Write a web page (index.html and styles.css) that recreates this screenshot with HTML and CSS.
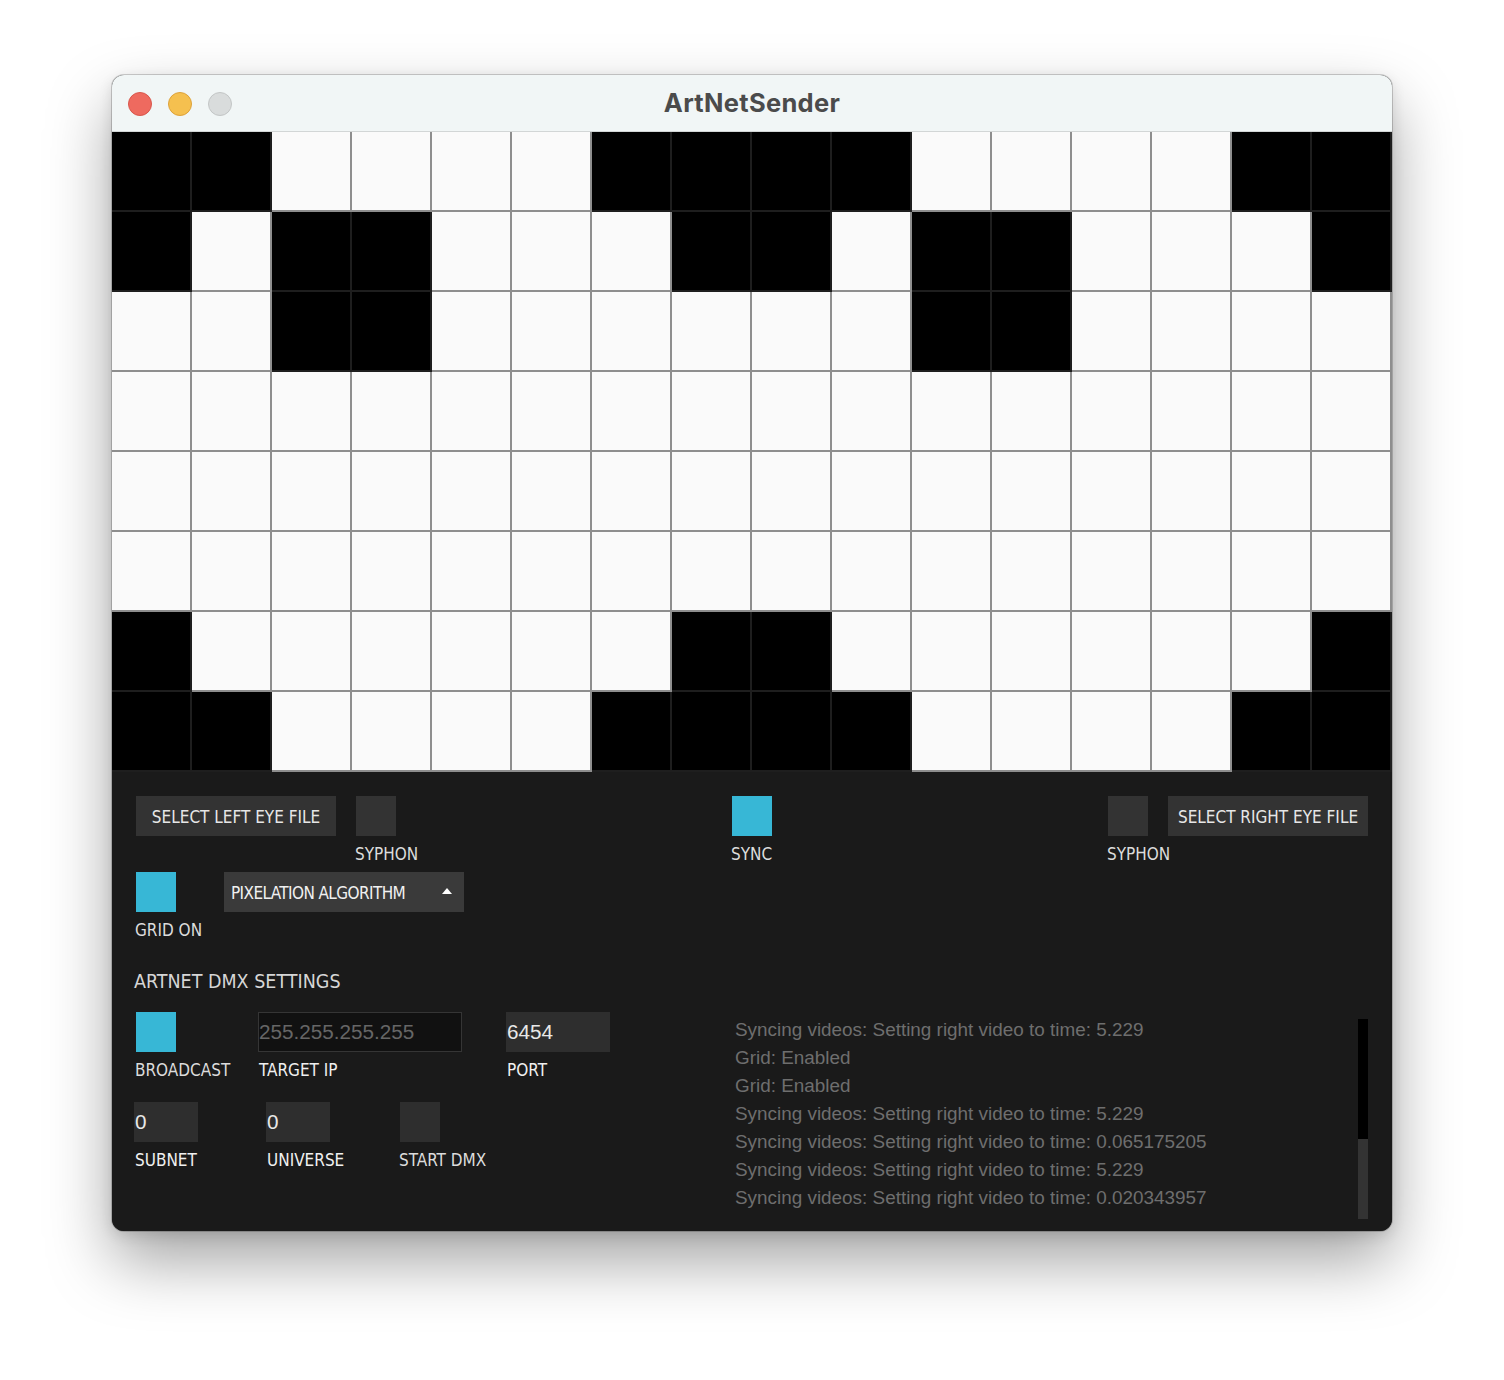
FILE: index.html
```html
<!DOCTYPE html>
<html>
<head>
<meta charset="utf-8">
<title>ArtNetSender</title>
<link rel="stylesheet" href="styles.css">
</head>
<body>
<div class="stage">
  <div class="window">
    <div class="titlebar">
      <div class="lights">
        <span class="light red"></span>
        <span class="light yellow"></span>
        <span class="light grey"></span>
      </div>
      <div class="title">ArtNetSender</div>
    </div>

    <div class="grid">
      <div class="c b"></div><div class="c b"></div><div class="c"></div><div class="c"></div><div class="c"></div><div class="c"></div><div class="c b"></div><div class="c b"></div><div class="c b"></div><div class="c b"></div><div class="c"></div><div class="c"></div><div class="c"></div><div class="c"></div><div class="c b"></div><div class="c b"></div>
      <div class="c b"></div><div class="c"></div><div class="c b"></div><div class="c b"></div><div class="c"></div><div class="c"></div><div class="c"></div><div class="c b"></div><div class="c b"></div><div class="c"></div><div class="c b"></div><div class="c b"></div><div class="c"></div><div class="c"></div><div class="c"></div><div class="c b"></div>
      <div class="c"></div><div class="c"></div><div class="c b"></div><div class="c b"></div><div class="c"></div><div class="c"></div><div class="c"></div><div class="c"></div><div class="c"></div><div class="c"></div><div class="c b"></div><div class="c b"></div><div class="c"></div><div class="c"></div><div class="c"></div><div class="c"></div>
      <div class="c"></div><div class="c"></div><div class="c"></div><div class="c"></div><div class="c"></div><div class="c"></div><div class="c"></div><div class="c"></div><div class="c"></div><div class="c"></div><div class="c"></div><div class="c"></div><div class="c"></div><div class="c"></div><div class="c"></div><div class="c"></div>
      <div class="c"></div><div class="c"></div><div class="c"></div><div class="c"></div><div class="c"></div><div class="c"></div><div class="c"></div><div class="c"></div><div class="c"></div><div class="c"></div><div class="c"></div><div class="c"></div><div class="c"></div><div class="c"></div><div class="c"></div><div class="c"></div>
      <div class="c"></div><div class="c"></div><div class="c"></div><div class="c"></div><div class="c"></div><div class="c"></div><div class="c"></div><div class="c"></div><div class="c"></div><div class="c"></div><div class="c"></div><div class="c"></div><div class="c"></div><div class="c"></div><div class="c"></div><div class="c"></div>
      <div class="c b"></div><div class="c"></div><div class="c"></div><div class="c"></div><div class="c"></div><div class="c"></div><div class="c"></div><div class="c b"></div><div class="c b"></div><div class="c"></div><div class="c"></div><div class="c"></div><div class="c"></div><div class="c"></div><div class="c"></div><div class="c b"></div>
      <div class="c b"></div><div class="c b"></div><div class="c"></div><div class="c"></div><div class="c"></div><div class="c"></div><div class="c b"></div><div class="c b"></div><div class="c b"></div><div class="c b"></div><div class="c"></div><div class="c"></div><div class="c"></div><div class="c"></div><div class="c b"></div><div class="c b"></div>
    </div>

    <div class="panel">
      <div class="row-top">
        <div class="group left">
          <div class="button">SELECT LEFT EYE FILE</div>
          <div class="ctl">
            <div class="toggle"></div>
            <div class="label">SYPHON</div>
          </div>
        </div>
        <div class="group mid">
          <div class="ctl">
            <div class="toggle on"></div>
            <div class="label">SYNC</div>
          </div>
        </div>
        <div class="group right">
          <div class="ctl">
            <div class="toggle"></div>
            <div class="label">SYPHON</div>
          </div>
          <div class="button">SELECT RIGHT EYE FILE</div>
        </div>
      </div>

      <div class="row-grid">
        <div class="ctl wide88">
          <div class="toggle on"></div>
          <div class="label">GRID ON</div>
        </div>
        <div class="dropdown">
          <span class="dd-text">PIXELATION ALGORITHM</span>
          <span class="dd-arrow"></span>
        </div>
      </div>

      <div class="lower">
        <div class="settings">
          <div class="header">ARTNET DMX SETTINGS</div>
          <div class="row-net">
            <div class="ctl">
              <div class="toggle on"></div>
              <div class="label">BROADCAST</div>
            </div>
            <div class="ctl">
              <div class="field ip">255.255.255.255</div>
              <div class="label bright">TARGET IP</div>
            </div>
            <div class="ctl">
              <div class="field port">6454</div>
              <div class="label bright">PORT</div>
            </div>
          </div>
          <div class="row-dmx">
            <div class="ctl">
              <div class="field small">0</div>
              <div class="label bright">SUBNET</div>
            </div>
            <div class="ctl">
              <div class="field small">0</div>
              <div class="label bright">UNIVERSE</div>
            </div>
            <div class="ctl">
              <div class="toggle dim"></div>
              <div class="label">START DMX</div>
            </div>
          </div>
        </div>

        <div class="log">
          <div class="log-lines">
            <div>Syncing videos: Setting right video to time: 5.229</div>
            <div>Grid: Enabled</div>
            <div>Grid: Enabled</div>
            <div>Syncing videos: Setting right video to time: 5.229</div>
            <div>Syncing videos: Setting right video to time: 0.065175205</div>
            <div>Syncing videos: Setting right video to time: 5.229</div>
            <div>Syncing videos: Setting right video to time: 0.020343957</div>
          </div>
          <div class="scrollbar"><div class="thumb"></div></div>
        </div>
      </div>
    </div>
  </div>
</div>
</body>
</html>
```

FILE: styles.css
```css
* { box-sizing: border-box; }

html, body {
  margin: 0;
  padding: 0;
  background: #ffffff;
}

.stage {
  padding: 75px 0 0 112px;
  width: 1504px;
  height: 1380px;
}

.window {
  width: 1280px;
  height: 1156px;
  border-radius: 12px;
  overflow: hidden;
  background: #1a1a1a;
  box-shadow: 0 0 0 1px rgba(0, 0, 0, 0.18), 0 30px 64px rgba(0, 0, 0, 0.36), 0 4px 14px rgba(0, 0, 0, 0.12);
}

.titlebar {
  height: 57px;
  background: #f1f6f6;
  border-bottom: 1px solid #d2d6d6;
  display: flex;
  align-items: center;
  position: relative;
}

.lights {
  display: flex;
  gap: 16px;
  padding-left: 16px;
  padding-top: 1px;
}

.light {
  width: 24px;
  height: 24px;
  border-radius: 50%;
  display: block;
}
.light.red { background: #ee6a5f; border: 1px solid #d9574c; }
.light.yellow { background: #f5c04f; border: 1px solid #dea23a; }
.light.grey { background: #d9dcdc; border: 1px solid #c3c6c6; }

.title {
  position: absolute;
  left: 0;
  right: 0;
  top: 0;
  height: 56px;
  line-height: 56px;
  text-align: center;
  font-family: Inter, "Noto Sans", sans-serif;
  font-weight: 700;
  font-size: 25.5px;
  letter-spacing: 0.3px;
  color: #4b4b4b;
}

.grid {
  display: grid;
  grid-template-columns: repeat(16, 80px);
  grid-template-rows: repeat(8, 80px);
}

.c {
  background: #fafafa;
  box-shadow: inset -2px -2px 0 #8e8e8e;
}
.c.b {
  background: #000000;
  box-shadow: inset -2px -2px 0 #1e1e1e;
}

.panel {
  height: 459px;
  background: #1a1a1a;
  padding-top: 24px;
  font-family: "DejaVu Sans Condensed", "Liberation Sans", sans-serif;
  color: #e4e4e4;
}

.row-top {
  display: grid;
  grid-template-columns: 1fr auto 1fr;
  padding: 0 24px;
}

.group {
  display: flex;
  gap: 20px;
  align-items: flex-start;
}
.group.right { justify-content: flex-end; }

.button {
  width: 200px;
  height: 40px;
  padding-top: 2px;
  background: #333333;
  display: flex;
  align-items: center;
  justify-content: center;
  font-size: 17px;
  color: #e6e6e6;
  white-space: nowrap;
}

.ctl {
  width: 40px;
  display: flex;
  flex-direction: column;
  align-items: flex-start;
}

.toggle {
  width: 40px;
  height: 40px;
  background: #333333;
}
.toggle.on { background: #37b7d6; }
.toggle.dim { background: #2e2e2e; }

.label {
  margin-top: 8px;
  height: 20px;
  line-height: 20px;
  font-size: 17px;
  white-space: nowrap;
  color: #dcdcdc;
  margin-left: -1px;
}
.label.bright { color: #f0f0f0; margin-left: 1px; }

.row-grid {
  display: flex;
  padding: 0 24px;
  margin-top: 8px;
}
.ctl.wide88 { width: 88px; }

.dropdown {
  width: 240px;
  height: 40px;
  background: #3a3a3a;
  display: flex;
  align-items: center;
  justify-content: space-between;
  padding: 2px 12px 0 7px;
  font-size: 17px;
  color: #f0f0f0;
}

.dd-text {
  letter-spacing: -0.6px;
}

.dd-arrow {
  width: 0;
  height: 0;
  border-left: 5px solid transparent;
  border-right: 5px solid transparent;
  border-bottom: 6px solid #ffffff;
  margin-top: -4px;
}

.lower {
  display: flex;
  padding: 0 24px 0 22px;
  margin-top: 29px;
}

.settings {
  flex: 0 0 601px;
}

.header {
  font-size: 19.5px;
  line-height: 24px;
  color: #d6d6d6;
  padding-top: 1px;
  height: 24px;
}

.row-net {
  display: grid;
  grid-template-columns: 122px 248px 104px;
  padding-left: 2px;
  margin-top: 19px;
}

.row-dmx {
  display: grid;
  grid-template-columns: 132px 134px 80px;
  margin-top: 22px;
}

.field {
  height: 40px;
  background: #2e2e2e;
  font-family: "Liberation Sans", sans-serif;
  font-size: 20.7px;
  line-height: 40px;
  color: #e8e8e8;
  padding-left: 1px;
  white-space: nowrap;
}
.field.ip {
  width: 204px;
  background: #111111;
  border: 1px solid #353535;
  line-height: 38px;
  padding-left: 0;
  color: #666666;
}
.field.port { width: 104px; }
.field.small { width: 64px; }

.log {
  flex: 1;
  display: flex;
  margin-top: 47px;
}

.log-lines {
  flex: 1;
  font-family: "Liberation Sans", sans-serif;
  font-size: 18.9px;
  line-height: 28px;
  color: #6e6e6e;
  white-space: nowrap;
}

.scrollbar {
  width: 10px;
  height: 200px;
  margin-top: 3px;
  background: #333333;
}
.thumb {
  height: 120px;
  background: #000000;
}
```
